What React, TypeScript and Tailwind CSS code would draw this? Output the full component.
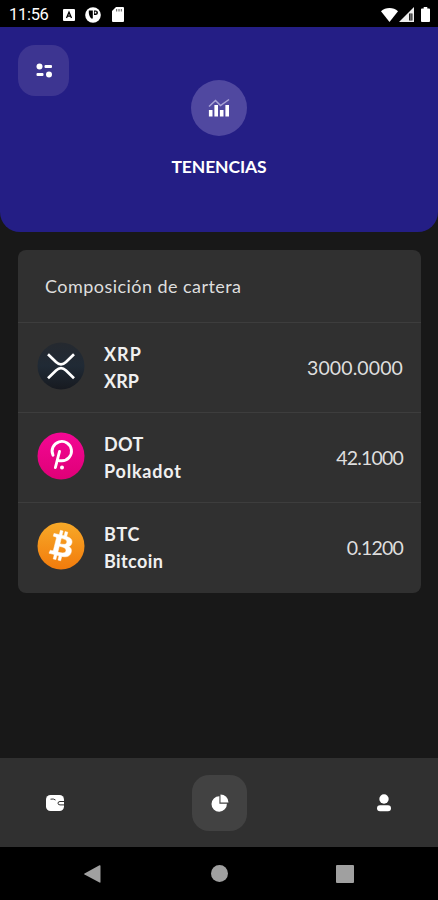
import React from 'react';

const StatusBar: React.FC = () => (
  <div className="flex h-[27px] items-center bg-black pl-[9px] pr-[8px] pt-[2px] text-white">
    <span className="w-[54px] pt-px font-[Roboto] text-[16.5px] leading-none tracking-[-0.3px]">11:56</span>
    <svg className="h-3 w-3" viewBox="0 0 12 12">
      <rect width="12" height="12" rx="1" fill="#fff" />
      <path d="M3.5 9 6 3.2 8.5 9M4.5 7.2h3" fill="none" stroke="#000" strokeWidth="1.3" />
    </svg>
    <svg className="ml-[10px] h-4 w-4" viewBox="0 0 16 16">
      <circle cx="8" cy="8" r="7.8" fill="#fff" />
      <path d="M3.8 3.5h4v8H6.2Q3.5 9 3.8 3.5Z" fill="#000" />
      <path d="M9 3.5h2q2 .3 2 2.3t-2 2.2H9Z" fill="#000" />
      <rect x="9.7" y="4.7" width="1.6" height="1.8" fill="#fff" />
    </svg>
    <svg className="ml-[11px] h-[15px] w-3" viewBox="0 0 12 15">
      <path d="M4 0h7a1 1 0 0 1 1 1v13a1 1 0 0 1-1 1H1a1 1 0 0 1-1-1V4Z" fill="#fff" />
      <path d="M4.7 2v2.5M7 2v2.5M9.3 2v2.5" stroke="#555" strokeWidth="1" />
    </svg>
    <svg className="ml-auto h-[14px] w-[17px]" viewBox="0 0 17 14">
      <path d="M0 3.2a13 13 0 0 1 17 0L8.5 14Z" fill="#fff" />
    </svg>
    <svg className="ml-px h-[15px] w-[15px]" viewBox="0 0 15 15">
      <path d="M0 15 15 0v15Z" fill="#eee" />
      <path d="M10 6.5h3.5v7H10Z" fill="#222" />
      <path d="M11.900 6v7" stroke="#999" strokeWidth="1" />
    </svg>
    <svg className="ml-[7px] h-[15px] w-[9px]" viewBox="0 0 10 15" preserveAspectRatio="none">
      <path d="M3 0h4v1.5h2a1 1 0 0 1 1 1V14a1 1 0 0 1-1 1H1a1 1 0 0 1-1-1V2.5a1 1 0 0 1 1-1h2Z" fill="#fff" />
    </svg>
  </div>
);

const XrpIcon: React.FC = () => (
  <svg className="h-12 w-12" viewBox="0 0 48 48">
    <defs>
      <linearGradient id="xrp" x1="0" y1="0" x2="0" y2="1">
        <stop offset="0" stopColor="#25292f" />
        <stop offset="0.5" stopColor="#202a35" />
        <stop offset="1" stopColor="#171a20" />
      </linearGradient>
    </defs>
    <circle cx="24" cy="24" r="23.5" fill="url(#xrp)" />
    <path d="M11 12.2 19 20q5 4.6 10 0l8-7.8M11 36.3l8-7.800q5-4.600 10 0l8 7.800" fill="none" stroke="#fff" strokeWidth="2.7" />
  </svg>
);

const DotIcon: React.FC = () => (
  <svg className="h-12 w-12" viewBox="0 0 48 48">
    <defs>
      <linearGradient id="dot" x1="0" y1="0" x2="0" y2="1">
        <stop offset="0" stopColor="#f40794" />
        <stop offset="1" stopColor="#df0077" />
      </linearGradient>
    </defs>
    <circle cx="24" cy="24" r="23.5" fill="url(#dot)" />
    <path d="M16 23.200a9.700 9.700 0 1 1 8.700 5.600h-2.500M22.500 19.500l-4.100 16" fill="none" stroke="#fff" strokeWidth="2.9" strokeLinecap="round" />
    <circle cx="25" cy="35.5" r="2" fill="#fff" />
  </svg>
);

const BtcIcon: React.FC = () => (
  <svg className="h-12 w-12" viewBox="0 0 24 24">
    <defs>
      <linearGradient id="btc" x1="0" y1="0" x2="0" y2="1">
        <stop offset="0" stopColor="#f7a928" />
        <stop offset="1" stopColor="#f27b0c" />
      </linearGradient>
    </defs>
    <circle cx="12" cy="12" r="11.75" fill="url(#btc)" />
    <path
      d="M17.288 10.291c.24-1.59-.974-2.45-2.64-3.03l.54-2.153-1.315-.33-.525 2.107c-.345-.087-.705-.167-1.064-.25l.526-2.127-1.32-.33-.54 2.165c-.285-.067-.565-.132-.84-.2l-1.815-.45-.35 1.407s.975.225.955.236c.535.136.63.486.615.766l-1.477 5.92c-.075.166-.24.406-.614.314.015.02-.96-.24-.96-.24l-.66 1.51 1.71.426.93.242-.54 2.19 1.32.327.54-2.17c.36.1.705.19 1.05.273l-.51 2.154 1.32.33.545-2.19c2.24.427 3.93.257 4.64-1.774.57-1.637-.03-2.58-1.217-3.196.854-.193 1.5-.76 1.68-1.93h.01zM14.278 14.511c-.404 1.64-3.157.75-4.05.53l.72-2.9c.896.23 3.757.67 3.33 2.37zM14.688 10.271c-.37 1.49-2.662.735-3.405.55l.654-2.64c.744.18 3.137.524 2.75 2.084z"
      fill="#fff"
      fillRule="evenodd"
      stroke="#fff"
      strokeWidth="0.25"
      transform="translate(12.2 12) translate(-12 -12)"
    />
  </svg>
);

const holdings = [
  { symbol: 'XRP', name: 'XRP', amount: '3000.0000', icon: <XrpIcon />, symbolTracking: 'tracking-[1px]', nameTracking: 'tracking-[0.1px]', amountTracking: 'tracking-[0.1px]' },
  { symbol: 'DOT', name: 'Polkadot', amount: '42.1000', icon: <DotIcon />, symbolTracking: 'tracking-[0.3px]', nameTracking: 'tracking-[0.8px]', amountTracking: 'tracking-[-0.8px]' },
  { symbol: 'BTC', name: 'Bitcoin', amount: '0.1200', icon: <BtcIcon />, symbolTracking: 'tracking-[0.7px]', nameTracking: 'tracking-[0.4px]', amountTracking: 'tracking-[-0.8px]' },
];

const App: React.FC = () => {
  return (
    <div className="flex h-[900px] w-[438px] flex-col overflow-hidden bg-[#181818] font-[Lato,sans-serif] text-white">
      <StatusBar />

      {/* Header */}
      <header className="grid h-[205px] grid-cols-[51px_1fr_51px] rounded-b-[20px] bg-[#241e85] px-[18px] pt-[18px]">
        <button className="flex h-[51px] w-[51px] items-center justify-center rounded-[17px] bg-[#3d3591]">
          <svg className="h-4 w-[18px]" viewBox="0 0 18 16">
            <g fill="#fff">
              <circle cx="4.5" cy="3.5" r="3" />
              <rect x="9.5" y="2" width="7.5" height="3" rx="1" />
              <rect x="1.5" y="10" width="7" height="3" rx="1" />
              <circle cx="14" cy="11.5" r="3" />
            </g>
          </svg>
        </button>
        <div className="flex flex-col items-center pt-[35px]">
          <div className="flex h-14 w-14 items-center justify-center rounded-full bg-[#5048a0]">
            <svg className="h-5 w-[22px]" viewBox="0 0 22 20">
              <path d="M1 8.5 7.5 2.5l5 5L21 1.5" fill="none" stroke="#aaa5d5" strokeWidth="1.5" />
              <path d="M2.700 18.500v-6.500M8.200 18.500V7M13.700 18.500v-6.500M19.200 18.500V7" stroke="#fff" strokeWidth="3.6" />
            </svg>
          </div>
          <h1 className="mt-[19px] text-[17.5px] font-bold leading-6 tracking-[-0.1px]">TENENCIAS</h1>
        </div>
      </header>

      {/* Portfolio */}
      <main className="flex-1 px-[18px] pt-[18px]">
        <section className="h-[343px] w-[403px] rounded-[8px] bg-[#303030]">
          <h2 className="h-[72px] pl-[27px] pt-[24px] text-[18px] leading-6 tracking-[0.45px] text-[#dedede]">Composición de cartera</h2>
          {holdings.map((item) => (
            <div key={item.symbol} className="flex h-[90px] items-center border-t border-[#3d3d3d] pl-[19px] pr-[18px]">
              <div className="mb-[3px]">{item.icon}</div>
              <div className="ml-[19px] text-[18px] font-bold leading-[27px] text-[#f0f0f0]">
                <div className={item.symbolTracking}>{item.symbol}</div>
                <div className={item.nameTracking}>{item.name}</div>
              </div>
              <span className={`ml-auto text-[19.5px] text-[#dedede] ${item.amountTracking}`}>{item.amount}</span>
            </div>
          ))}
        </section>
      </main>

      {/* Tabs */}
      <nav className="grid h-[89px] grid-cols-[110px_219px_109px] place-items-center bg-[#303030]">
        <svg className="h-4 w-[18px]" viewBox="0 0 18 16">
          <rect width="18" height="16" rx="4.5" fill="#fff" />
          <path d="M4.5 4.2q3-.8 5 .8M18 6.5h-4q-2 0-2 1.700t2 1.700h4" fill="none" stroke="#303030" strokeWidth="1" />
        </svg>
        <button className="flex h-14 w-[55px] items-center justify-center rounded-[17px] bg-[#424242]">
          <svg className="h-[18px] w-[18px]" viewBox="0 0 18 18">
            <path d="M8.4 2.3v7.5h7.500A7.700 7.700 0 1 1 8.4 2.3Z" fill="#fff" />
            <path d="M9.5.5a8 8 0 0 1 8 8h-8Z" fill="#fff" />
          </svg>
        </button>
        <svg className="h-[18px] w-4" viewBox="0 0 16 18">
          <circle cx="8" cy="5" r="4.7" fill="#fff" />
          <rect x="1" y="11.2" width="14" height="6" rx="3" fill="#fff" />
        </svg>
      </nav>

      {/* System buttons */}
      <div className="flex h-[53px] items-center justify-between bg-black px-[84px]">
        <svg className="h-[18px] w-[17px]" viewBox="0 0 17 18">
          <path d="M15.5.3Q16.5 0 16.5 1v16q0 1-1 .5L.5 9.5q-.7-.5 0-1Z" fill="#a0a0a0" />
        </svg>
        <div className="ml-px h-[17px] w-[17px] rounded-full bg-[#a0a0a0]" />
        <div className="h-[18px] w-[18px] rounded-[1px] bg-[#a0a0a0]" />
      </div>
    </div>
  );
};

export default App;
